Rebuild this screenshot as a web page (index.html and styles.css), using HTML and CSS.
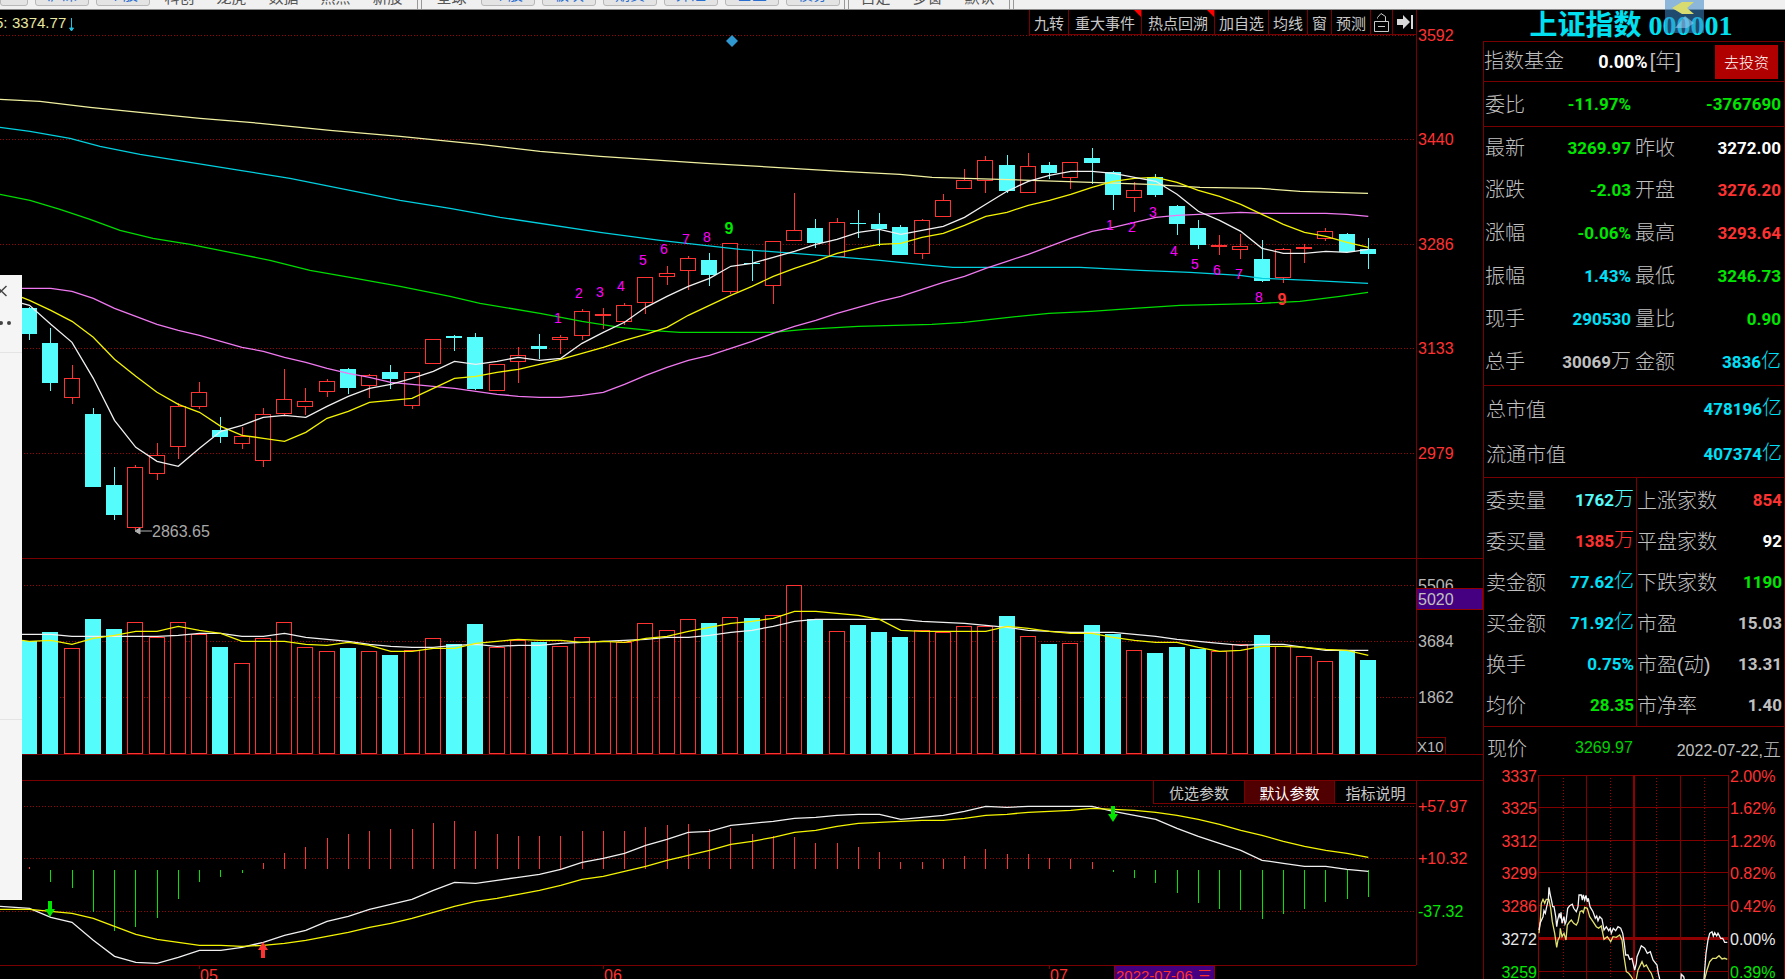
FILE: index.html
```html
<!DOCTYPE html>
<html lang="zh-CN">
<head>
<meta charset="utf-8">
<title>上证指数 000001</title>
<link rel="stylesheet" href="styles.css">
</head>
<body>
<div class="app">
  <nav class="menu">
    <button class="menu-btn menu-btn-first"></button>
    <button class="menu-btn">沪深</button>
    <button class="menu-btn">个股</button>
    <a class="menu-link" href="#">科创</a>
    <a class="menu-link" href="#">龙虎</a>
    <a class="menu-link" href="#">数据</a>
    <a class="menu-link" href="#">热点</a>
    <a class="menu-link" href="#">新股</a>
    <span class="menu-sep"></span>
    <a class="menu-link" href="#">全球</a>
    <button class="menu-btn">个股</button>
    <button class="menu-btn">板块</button>
    <button class="menu-btn">期货</button>
    <button class="menu-btn">外汇</button>
    <button class="menu-btn">基金</button>
    <button class="menu-btn">债券</button>
    <span class="menu-sep menu-sep-tight"></span>
    <a class="menu-link" href="#">自定</a>
    <a class="menu-link" href="#">多窗</a>
    <a class="menu-link" href="#">默认</a>
    <span class="menu-sep"></span>
  </nav>

  <div class="body">
    <main class="charts">
      <section class="pane">
        <svg class="plot" id="kline"></svg>
        <div class="tools">
          <button>九转</button>
          <button class="hot">重大事件</button>
          <button class="hot">热点回溯</button>
          <button>加自选</button>
          <button>均线</button>
          <button>窗</button>
          <button>预测</button>
          <button class="icon" aria-label="锁定"><svg width="15" height="19" viewBox="0 0 15 19"><path d="M.500 8.500h14v10H.500zM3.500 5.500V4.500l3.500-4 4.500 3v5M4 13.500h7" fill="none" stroke="#c8c8c8"/></svg></button>
          <button class="icon" aria-label="最后"><svg width="17" height="14" viewBox="0 0 17 14"><path d="M1 4h6V0l7 7-7 7v-4H1zM15 0h2v14h-2z" fill="#d8d8d8"/></svg></button>
        </div>
      </section>
      <section class="pane"><svg class="plot" id="volume"></svg></section>
      <div class="pane"></div>
      <section class="pane pane-macd">
        <svg class="plot" id="macd"></svg>
        <div class="tools tabs">
          <button>优选参数</button>
          <button class="active">默认参数</button>
          <button>指标说明</button>
        </div>
      </section>
      <svg class="plot" id="dates"></svg>
    </main>

    <aside class="quote">
      <h1 class="title">上证指数 000001</h1>
      <div class="panel">
        <div class="fund"><span>指数基金</span><span><b class="white">0.00%</b>[年]</span><button class="invest">去投资</button></div>
        <dl class="rows bid">
          <dt>委比</dt><dd class="green">-11.97%</dd><dt></dt><dd class="green">-3767690</dd>
        </dl>
        <dl class="rows basic">
          <dt>最新</dt><dd class="green">3269.97</dd><dt>昨收</dt><dd class="white">3272.00</dd>
          <dt>涨跌</dt><dd class="green">-2.03</dd><dt>开盘</dt><dd class="red">3276.20</dd>
          <dt>涨幅</dt><dd class="green">-0.06%</dd><dt>最高</dt><dd class="red">3293.64</dd>
          <dt>振幅</dt><dd class="cyan">1.43%</dd><dt>最低</dt><dd class="green">3246.73</dd>
          <dt>现手</dt><dd class="cyan">290530</dd><dt>量比</dt><dd class="green">0.90</dd>
          <dt>总手</dt><dd>30069<i>万</i></dd><dt>金额</dt><dd class="cyan">3836<i>亿</i></dd>
        </dl>
        <dl class="rows cap">
          <dt>总市值</dt><dd class="cyan">478196<i>亿</i></dd>
          <dt>流通市值</dt><dd class="cyan">407374<i>亿</i></dd>
        </dl>
        <div class="split">
          <dl class="rows half">
            <dt>委卖量</dt><dd class="aqua">1762<i>万</i></dd>
            <dt>委买量</dt><dd class="red">1385<i>万</i></dd>
            <dt>卖金额</dt><dd class="cyan">77.62<i>亿</i></dd>
            <dt>买金额</dt><dd class="cyan">71.92<i>亿</i></dd>
            <dt>换手</dt><dd class="cyan">0.75%</dd>
            <dt>均价</dt><dd class="green">28.35</dd>
          </dl>
          <dl class="rows half">
            <dt>上涨家数</dt><dd class="red">854</dd>
            <dt>平盘家数</dt><dd class="white">92</dd>
            <dt>下跌家数</dt><dd class="green">1190</dd>
            <dt>市盈</dt><dd>15.03</dd>
            <dt>市盈(动)</dt><dd>13.31</dd>
            <dt>市净率</dt><dd>1.40</dd>
          </dl>
        </div>
        <div class="now"><span>现价</span><span class="now-price">3269.97</span><span class="now-date">2022-07-22,<i>五</i></span></div>
        <svg class="mini" id="mini"></svg>
      </div>
      <svg class="badge" viewBox="0 0 39 33"><path d="M0 0h39v33H0z" fill="#3a86c8" opacity=".55"/><path d="M7 8 17 2h12l-7 6 7 6H17z" fill="#d8dc70"/><path d="M10 28 20 16l9 7-7 5z" fill="#8cc8f0" opacity=".6"/></svg>
    </aside>
  </div>

  <div class="drawer">
    <button class="drawer-close" aria-label="关闭"><svg width="7" height="12" viewBox="0 0 7 12"><path d="M6.500 1-4 11M-4 1 6.500 11" stroke="#444" stroke-width="1.500"/></svg></button>
    <button class="drawer-more" aria-label="更多"><svg width="12" height="6" viewBox="0 0 12 6"><circle cx="1" cy="3" r="2" fill="#444"/><circle cx="9" cy="3" r="2" fill="#444"/></svg></button>
    <div class="drawer-body"></div>
  </div>
</div>
<script src="chart.js"></script>
</body>
</html>
```
FILE: styles.css
```css
* { box-sizing: border-box; margin: 0; padding: 0; }
body {
  background: #000;
  color: #c0c0c0;
  font-family: "Liberation Sans", "Noto Sans CJK SC", sans-serif;
  font-size: 15px;
  overflow: hidden;
}
button { font: inherit; color: inherit; background: none; border: 0; white-space: nowrap; }
i { font-style: normal; font-weight: 300; }
.app { display: flex; flex-direction: column; height: 100vh; position: relative; }

.menu {
  display: flex;
  align-items: flex-end;
  gap: 7px;
  height: 10px;
  overflow: hidden;
  background: #f0f0f0;
  border-bottom: 1px solid #8a8a8a;
}
.menu-btn {
  flex: none;
  width: 54px;
  height: 22px;
  margin-bottom: 3px;
  line-height: 16px;
  color: #2a6fd0;
  background: #e4e4e4;
  border: 1px solid #b8b8b8;
  border-radius: 3px;
}
.menu-btn-first { width: 28px; }
.menu-link { flex: none; width: 45px; line-height: 20px; text-align: center; color: #555; text-decoration: none; margin-bottom: 1px; }
.menu-sep { flex: none; width: 5px; height: 9px; border: solid #999; border-width: 0 1px; }
.menu-sep-tight { margin: 0 -3px; }

.body { flex: 1; min-height: 0; display: grid; grid-template-columns: 1fr 302px; }
.charts { display: grid; grid-template-rows: 549fr 196fr 26px 184fr 14px; min-width: 0; min-height: 0; font-size: 16px; }
.pane { position: relative; min-height: 0; border-bottom: 1px solid #780000; }
.pane-macd { border-bottom: 0; }
.plot { display: block; width: 100%; height: 100%; overflow: hidden; }
.tools { position: absolute; top: 0; right: 66px; display: flex; height: 25px; border: 1px solid #780000; border-top: 0; font-size: 15px; }
.tools button { position: relative; display: flex; align-items: center; padding: 0 4px; color: #c8c8c8; }
.tools .icon { padding: 0 3px; }
.tools svg { flex: none; }
.tools button + button { border-left: 1px solid #780000; }
.tools .hot { padding: 0 6px; }
.tools .hot::after {
  content: "";
  position: absolute;
  top: 0;
  right: 0;
  border: solid transparent;
  border-width: 0 0 7px 7px;
  border-right: 0;
  border-top: 7px solid #f00;
  border-bottom: 0;
}
.tabs { height: 23px; }
.tools.tabs button { width: 90px; justify-content: center; }
.tools.tabs button:last-child { width: 82px; }
.tools.tabs .active { background: #500000; color: #fff; }

.quote { position: relative; display: flex; flex-direction: column; min-height: 0; }
.title {
  height: 31px;
  text-align: center;
  white-space: pre;
  font: bold 28px/31px "Liberation Serif", "Noto Sans CJK SC", serif;
  color: #00e0f0;
  padding-right: 6px;
}
.badge { position: absolute; left: 182px; top: -10px; width: 39px; height: 33px; }
.panel { flex: 1; min-height: 0; overflow: hidden; border: 1px solid #780000; border-bottom: 0; font-size: 20px; font-weight: 300; }
.fund { display: flex; align-items: center; justify-content: space-between; height: 39px; padding-right: 6px; }
.invest { width: 63px; height: 34px; background: #b00000; color: #fff; font-size: 15px; }
.fund b, .rows dd { font-family: Roboto, "Noto Sans CJK SC", sans-serif; font-weight: 700; font-size: 18px; }
.fund b { margin-right: 2px; }
.fund span { white-space: nowrap; padding-bottom: 4px; }
.rows i { font-size: 20px; }
.rows {
  display: grid;
  grid-template-columns: 42px 106px 41px 109px;
  align-items: center;
  padding: 0 0 0 1px;
  border-top: 1px solid #780000;
}
.rows dt { white-space: nowrap; }
.rows dd { text-align: right; white-space: nowrap; line-height: 30px; padding-right: 2px; font-size: 17px; }
.rows dt:nth-of-type(even) { padding-left: 2px; }
.bid { height: 45px; padding-bottom: 1px; }
.basic { grid-template-rows: 41px; grid-auto-rows: 43px; height: 259px; align-content: start; }
.rows.basic { line-height: 28px; }
.cap { grid-template-columns: 90px 1fr; grid-auto-rows: 45px; height: 92px; padding-left: 2px; }
.half { grid-template-columns: 1fr auto; grid-auto-rows: 41px; height: 249px; padding-left: 2px; }
.rows.half { padding-top: 1px; }
.rows.cap dt:nth-of-type(even), .rows.half dt:nth-of-type(even) { padding-left: 0; }
.split { display: grid; grid-template-columns: 152px 1fr; }
.rows.half + .half { border-left: 1px solid #780000; padding-left: 0; }
.now { display: flex; align-items: center; height: 44px; border-top: 1px solid #780000; padding: 0 3px; font-size: 16px; font-weight: 400; }
.now span { padding-bottom: 2px; }
.now span:first-child { font-size: 20px; font-weight: 300; }
.now-price { color: #00d000; margin: 0 auto 0 48px; }
.now i { font-size: 18px; }
.mini { display: block; width: 100%; height: 210px; font-size: 16px; }

.white { color: #fff; }
.green { color: #00e600; }
.red { color: #ff3232; }
.cyan { color: #00e0f8; }
.aqua { color: #54fcfc; }

.drawer { position: absolute; left: 0; top: 275px; bottom: 79px; width: 22px; overflow: hidden; background: #f5f5f5; }
.drawer button { display: flex; align-items: center; height: 32px; }
.drawer .drawer-more { height: 45px; padding-bottom: 14px; }
.drawer-body { height: 368px; border: solid #e4e4e4; border-width: 1px 0; }
```
FILE: chart.js
```js
const NS = "http://www.w3.org/2000/svg";
const STEP = 21.25, FIRST = 29.5, AXIS = 67;
const RED = "#ff3232", CYAN = "#54fcfc", GRID = "#780000", GREEN = "#00e600";

// direction, high, body top, body bottom, low
const candles = `D307,308,334,340 D328,343,383,391 U365,378,397,404 D408,414,487,487 D467,485,515,520 U465,467,527,530
U443,455,473,480 U403,406,446,459 U382,392,406,409 D417,430,437,443 U427,436,443,449 U408,414,460,467 U369,399,413,415
U388,401,406,415 U379,381,391,397 D368,369,388,394 U374,375,385,398 D365,372,379,389 U372,372,405,409 U339,339,363,363
D335,336,338,351 D333,337,389,390 U364,364,390,391 U347,355,361,383 D334,346,349,359 U335,337,339,354 U309,311,335,340
U308,314,315,329 U303,305,321,325 U277,277,302,314 U266,273,276,285 U256,258,270,290 D253,260,275,286 U243,243,291,294
D251,263,264,281 U241,241,285,304 U193,230,240,240 D219,228,243,248 U218,222,256,257 D210,223,224,238 D213,224,229,246
D225,227,255,255 U219,220,253,259 U194,200,216,217 U169,180,188,188 U156,160,180,193 D155,165,191,193 U153,166,192,192
D162,165,173,179 U162,162,177,189 D148,158,163,184 D171,172,195,210 U182,190,197,212 D174,177,195,197 D205,206,224,235
D220,228,245,249 U235,245,246,255 U234,246,249,259 D240,259,281,282 U248,249,277,283 U244,247,247,263 U228,231,238,241
D233,234,252,252 D238,249,254,269`.split(/\s+/).map(s => [s[0], ...s.slice(1).split(",").map(Number)]);

const ma5 = [305,324,342,378,420,447,461,466,448,431,425,417,415,417,406,396,388,384,378,371,361,364,361,357,360,358,343,332,322,307,296,286,278,266,263,257,251,244,239,232,229,234,230,226,217,204,191,181,175,171,171,173,177,181,194,211,220,231,248,253,253,251,252,249];
const ma10 = [300,310,321,337,359,376,392,404,412,426,435,438,441,432,418,411,402,400,398,388,378,376,372,369,364,359,353,347,340,334,327,315,305,295,286,276,268,261,253,248,244,243,237,233,225,216,212,205,200,194,187,181,178,177,182,190,196,204,214,224,232,236,242,247];
const ma20 = [288,288,291,298,308,316,324,330,335,341,347,351,357,362,368,373,377,382,384,386,388,391,394,396,397,397,395,392,384,375,367,360,355,348,341,333,326,320,313,307,301,296,289,282,276,268,261,254,246,238,231,227,222,217,215,214,213,212,213,213,213,213,214,216];
const ma60 = [[0,194],[30,200],[60,209],[90,219],[120,230],[153,238],[190,244],[230,252],[270,260],[310,270],[350,277],[400,286],[450,296],[480,303],[540,313],[582,321],[620,327],[650,330],[680,332],[773,332],[805,329],[858,326],[932,324],[964,322],[1000,318],[1049,313],[1091,311],[1134,308],[1180,305],[1262,303],[1300,301],[1340,296],[1368,292]];
const ma120 = [[0,127],[30,131],[70,138],[100,146],[140,154],[190,162],[240,170],[290,178],[350,190],[400,200],[450,208],[500,217],[600,232],[660,240],[740,249],[820,255],[880,260],[930,265],[953,267],[1080,267],[1140,270],[1190,272],[1240,275],[1262,278],[1310,280],[1368,283]];
const ma250 = [[0,99],[40,101],[90,107],[150,113],[200,118],[260,123],[330,130],[400,136],[440,140],[480,144],[540,151],[600,156],[706,163],[842,171],[900,174],[932,177],[1000,179],[1091,182],[1150,184],[1200,187],[1260,188],[1300,191],[1368,193]];

const volumes = [641,632,648,619,629,622,637,622,634,647,663,638,622,647,651,648,651,655,650,638,644,624,647,640,642,646,637,641,642,623,630,619,623,617,618,615,585,619,631,625,632,637,630,632,626,626,616,636,644,643,625,634,650,653,647,649,651,644,635,646,656,661,650,660];
const vol10 = [634,634,636,636,636,636,636,635,633,633,636,636,633,637,639,641,644,646,647,647,645,644,646,645,645,643,642,641,640,639,637,637,635,632,630,626,621,619,619,619,619,619,621,622,623,625,627,630,631,632,632,632,634,636,639,641,643,645,644,644,647,650,650,650];
const vol5 = [641,640,644,638,635,631,631,626,630,633,641,641,641,644,645,642,645,651,651,648,648,643,641,639,640,640,642,641,642,638,636,631,627,623,621,618,611,611,613,615,619,630,631,631,631,631,626,628,631,633,633,637,640,642,642,647,651,650,646,646,647,649,650,655];

const hist = [867,882,888,912,931,927,918,899,882,877,873,863,853,847,838,834,831,829,829,823,821,831,834,836,836,836,831,831,831,827,825,824,829,828,834,836,837,843,843,847,852,862,862,859,856,849,854,854,858,859,862,872,878,883,893,903,909,910,919,914,909,902,899,897];
const dif = [908,917,922,940,956,962,963,957,950,950,947,942,935,930,921,916,909,904,899,890,882,883,880,877,874,869,862,858,853,845,839,832,831,825,823,821,818,817,815,814,814,819,817,815,811,806,807,806,806,806,806,811,815,819,828,836,843,850,860,863,866,866,869,871];
const dea = [909,911,913,918,926,934,939,942,945,945,946,945,943,940,936,932,927,923,918,912,906,901,898,894,890,885,879,876,871,866,860,855,850,844,841,837,832,830,826,823,822,821,820,820,818,815,814,812,811,810,808,809,810,812,815,819,824,830,835,841,846,850,853,857];

// Draws in design units (top = y of the pane's upper edge), scaled to the element's real size.
function surface(id, baseW, baseH, top, axis) {
  const svg = document.getElementById(id);
  svg.replaceChildren();
  const w = svg.clientWidth, h = svg.clientHeight;
  const sx = (w - axis) / (baseW - axis), sy = h / baseH;
  const X = x => x * sx, Y = y => (y - top) * sy;
  const add = (tag, attrs, text) => {
    const el = document.createElementNS(NS, tag);
    for (const k in attrs) el.setAttribute(k, attrs[k]);
    if (text) el.textContent = text;
    svg.append(el);
  };
  const half = v => Math.round(v) + 0.5;
  return {
    w, h, X, Y, add, right: w - axis,
    hline(y, x1, x2, color, dash) { add("path", { d: `M${x1} ${half(Y(y) - 0.5)}H${x2}`, stroke: color, "stroke-dasharray": dash || "none", "shape-rendering": "crispEdges" }); },
    vline(x, y1, y2, color, dash, width) { add("path", { d: `M${half(x - 0.5)} ${y1}V${y2}`, stroke: color, "stroke-width": width || 1, "stroke-dasharray": dash || "none", "shape-rendering": "crispEdges" }); },
    curve(pts, color) { add("polyline", { points: pts.map(p => `${X(p[0]).toFixed(1)},${(Y(p[1]) + 0.3).toFixed(1)}`).join(" "), fill: "none", stroke: color, "stroke-width": 1.3 }); },
    text(str, x, y, color, extra) { add("text", { x, y, fill: color, ...extra }, str); }
  };
}
const cx = i => FIRST + STEP * i;
const series = a => a.map((y, i) => [cx(i), y]);

function drawBox(s, i, top, bottom, up) {
  const x = Math.round(s.X(cx(i)) - 0.5) - 8, t = Math.round(s.Y(top)), b = Math.round(s.Y(bottom));
  const hgt = Math.max(b - t, 1);
  if (up) s.add("rect", { x: x + 0.5, y: t + 0.5, width: 15, height: hgt, fill: "#000", stroke: RED, "shape-rendering": "crispEdges" });
  else s.add("rect", { x, y: t, width: 16, height: hgt, fill: CYAN });
}

function kline() {
  const s = surface("kline", 1483, 548, 10, AXIS);
  [[3592, 35], [3440, 139], [3286, 244], [3133, 348], [2979, 453]].forEach(([label, y]) => {
    s.hline(y, 0, s.right, "#a00000", "1 2");
    s.text(label, s.right + 2, s.Y(y) + 6, RED);
  });
  s.vline(s.right, 0, s.h, GRID);
  candles.forEach(([dir, hi, top, bot, lo], i) => {
    s.vline(s.X(cx(i)), s.Y(hi), s.Y(lo), dir === "U" ? RED : CYAN);
    drawBox(s, i, top, bot, dir === "U");
  });
  s.curve(ma250, "#f0f0a0");
  s.curve(ma120, "#00d0e0");
  s.curve(ma60, "#00dc00");
  s.curve([[22, 288], ...series(ma20)], "#f078f0");
  s.curve([[22, 297], ...series(ma10)], "#f4f400");
  s.curve([[22, 303], ...series(ma5)], "#f0f0f0");
  const mark = { "text-anchor": "middle", "font-size": 14 };
  [[558,323],[579,298],[600,297],[621,291],[643,265],[664,254],[686,244],[707,242]].forEach(([x, y], i) => s.text(i + 1, s.X(x), s.Y(y), "#ff00ff", mark));
  [[1110,230],[1132,232],[1153,217],[1174,256],[1195,269],[1217,275],[1239,279],[1259,302]].forEach(([x, y], i) => s.text(i + 1, s.X(x), s.Y(y), "#ff00ff", mark));
  const nine = { "text-anchor": "middle", "font-size": 16, "font-weight": 700 };
  s.text("9", s.X(729), s.Y(234), GREEN, nine);
  s.text("9", s.X(1282), s.Y(305), RED, nine);
  s.add("path", { d: `M${s.X(732)} ${s.Y(35)}l6 6-6 6-6-6z`, fill: "#3098d0" });
  s.add("path", { d: `M${s.X(152)} ${s.Y(531)}h-12M${s.X(135)} ${s.Y(531)}l5-3v6z`, stroke: "#b0b0b0", fill: "#b0b0b0" });
  s.text("2863.65", s.X(152), s.Y(537), "#a8a8a8");
  const small = { "font-size": 15 };
  s.text("5:", -5, s.Y(28), "#e8e8a0", small);
  s.text("3374.77", 12, s.Y(28), "#e8e8a0", small);
  s.add("path", { d: `M71.500 ${s.Y(18)}v12M69.500 ${s.Y(28)}l2 3 2-3z`, stroke: "#20c0e0", fill: "#20c0e0" });
}

function volume() {
  const s = surface("volume", 1483, 195, 559, AXIS);
  [[5506, 585], [3684, 641], [1862, 697]].forEach(([label, y]) => {
    s.hline(y, 0, s.right, "#a00000", "1 2");
    s.text(label, s.right + 2, s.Y(y) + 6, "#b8b8b8");
  });
  volumes.forEach((y, i) => drawBox(s, i, y, candles[i][0] === "U" ? 753 : 754, candles[i][0] === "U"));
  s.curve([[22, 634], ...series(vol10)], "#f0f0f0");
  s.curve([[22, 640], ...series(vol5)], "#f4f400");
  s.vline(s.right, 0, s.h, GRID);
  s.add("rect", { x: s.right + 0.5, y: s.Y(589) - 0.5, width: AXIS - 1, height: 21, fill: "#440080", stroke: "#900000" });
  s.text("5020", s.right + 2, s.Y(605), "#c0c0c0");
  s.add("rect", { x: s.right + 0.5, y: s.Y(737) + 0.5, width: 29, height: 17, fill: "none", stroke: GRID });
  s.text("X10", s.right + 1, s.Y(752), "#b8b8b8", { "font-size": 15 });
}

function macd() {
  const s = surface("macd", 1483, 184, 781, AXIS);
  [["+57.97", 806, RED], ["+10.32", 858, RED], ["-37.32", 911, GREEN]].forEach(([label, y, color]) => {
    s.hline(y, 0, s.right, "#a00000", "1 2");
    s.text(label, s.right + 2, s.Y(y) + 6, color);
  });
  hist.forEach((y, i) => y < 870 ? s.vline(s.X(cx(i)), s.Y(y), s.Y(869), RED) : s.vline(s.X(cx(i)), s.Y(870), s.Y(y), GREEN));
  s.curve([[0, 906], [15, 907], ...series(dif)], "#f0f0f0");
  s.curve([[0, 909], ...series(dea)], "#f4f400");
  const arrow = (x, y, d, color) => s.add("path", { d: `M${s.X(x)} ${s.Y(y)}l-5 ${-8 * d}h3v${-8 * d}h4v${8 * d}h3z`, fill: color });
  arrow(50, 917, 1, GREEN);
  arrow(1113, 822, 1, GREEN);
  arrow(263, 942, -1, RED);
  s.vline(s.right, 0, s.h, GRID);
}

function dates() {
  const s = surface("dates", 1483, 14, 965, AXIS);
  s.hline(965, 0, s.right, GRID);
  [["05", 199], ["06", 603], ["07", 1049]].forEach(([label, x]) => {
    s.vline(s.X(x), 0, 4, GRID);
    s.text(label, s.X(x) + 1, 16, RED);
  });
  s.add("rect", { x: s.X(1114) + 0.5, y: 0.5, width: 100, height: 20, fill: "#440080", stroke: "#900000" });
  s.text("2022-07-06 三", s.X(1114) + 2, 16, RED, { "font-size": 15 });
}

function mini() {
  const s = surface("mini", 300, 210, 770, 0);
  const L = 54, R = s.w - 56, W = R - L, px = v => L + (v - 190) / 570 * W;
  const rows = [[775,"3337","2.00%",RED],[807,"3325","1.62%",RED],[840,"3312","1.22%",RED],[872,"3299","0.82%",RED],[905,"3286","0.42%",RED],[938,"3272","0.00%","#e8e8e8"],[971,"3259","0.39%",GREEN]];
  rows.forEach(([y, a, b, color]) => {
    s.hline(y, L, R, "#800000");
    s.text(a, L - 1, y - 770 + 7, color, { "text-anchor": "end" });
    s.text(b, R + 2, y - 770 + 7, color);
  });
  s.add("path", { d: `M${L} 168.500H${R}`, stroke: "#900000", "stroke-width": 3 });
  [190, 760].forEach(v => s.vline(px(v), 5, s.h, "#900000"));
  [336, 618].forEach(v => s.vline(px(v), 5, s.h, "#800000"));
  s.vline(px(476), 5, s.h, "#900000", null, 2);
  [265, 407, 546, 689].forEach(v => s.vline(px(v), 8, s.h, "#a00000", "1 2"));
  const line = (str, color) => s.add("path", {
    d: str.split("|").map(part => "M" + part.trim().split(/\s+/).map(p => {
      const [x, y] = p.split(",").map(Number);
      return `${px(x).toFixed(1)} ${(y / 3 - 30).toFixed(1)}`;
    }).join("L")).join(""), fill: "none", stroke: color, "stroke-width": 1.3
  });
  line("193,580 197,540 200,490 205,478 210,490 215,478 223,478 228,505 233,545 240,580 246,622 250,600 255,590 257,565 262,590 268,580 274,600 278,555 285,545 290,540 297,550 305,555 310,545 316,515 322,512 326,518 330,502 338,505 345,530 355,545 365,560 372,565 380,558 388,598 398,590 408,605 415,590 425,592 435,585 442,600 448,650 455,695 462,700 470,710 474,717|485,717 490,690 502,665 508,680 515,675 523,690 530,700 536,717|690,717 697,690 705,665 714,655 724,655 733,647 742,657 750,655 758,658", "#e0e070");
  line("193,570 197,548 205,530 208,512 212,520 216,500 221,480 223,442 227,465 230,478 234,500 238,500 243,530 246,560 249,540 254,520 257,535 259,517 262,550 268,530 271,552 274,545 279,505 285,497 293,493 297,505 305,515 310,500 313,465 320,465 323,480 326,465 330,480 334,466 338,485 341,475 346,500 355,515 362,535 366,528 370,542 375,530 382,537 388,570 395,560 402,572 407,565 410,580 416,565 423,572 430,560 438,565 444,580 449,610 453,645 460,645 465,658 472,655 480,690 485,670 487,650 495,630 500,617 510,625 518,640 527,635 535,660 547,675 551,700 555,717|619,717 620,703 627,710 629,717|688,717 690,690 694,640 700,600 705,580 712,575 716,588 720,578 726,588 730,580 738,595 744,595 750,607 758,607", "#f4f4f4");
}

function draw() { kline(); volume(); macd(); dates(); mini(); }
draw();
addEventListener("resize", draw);
```
